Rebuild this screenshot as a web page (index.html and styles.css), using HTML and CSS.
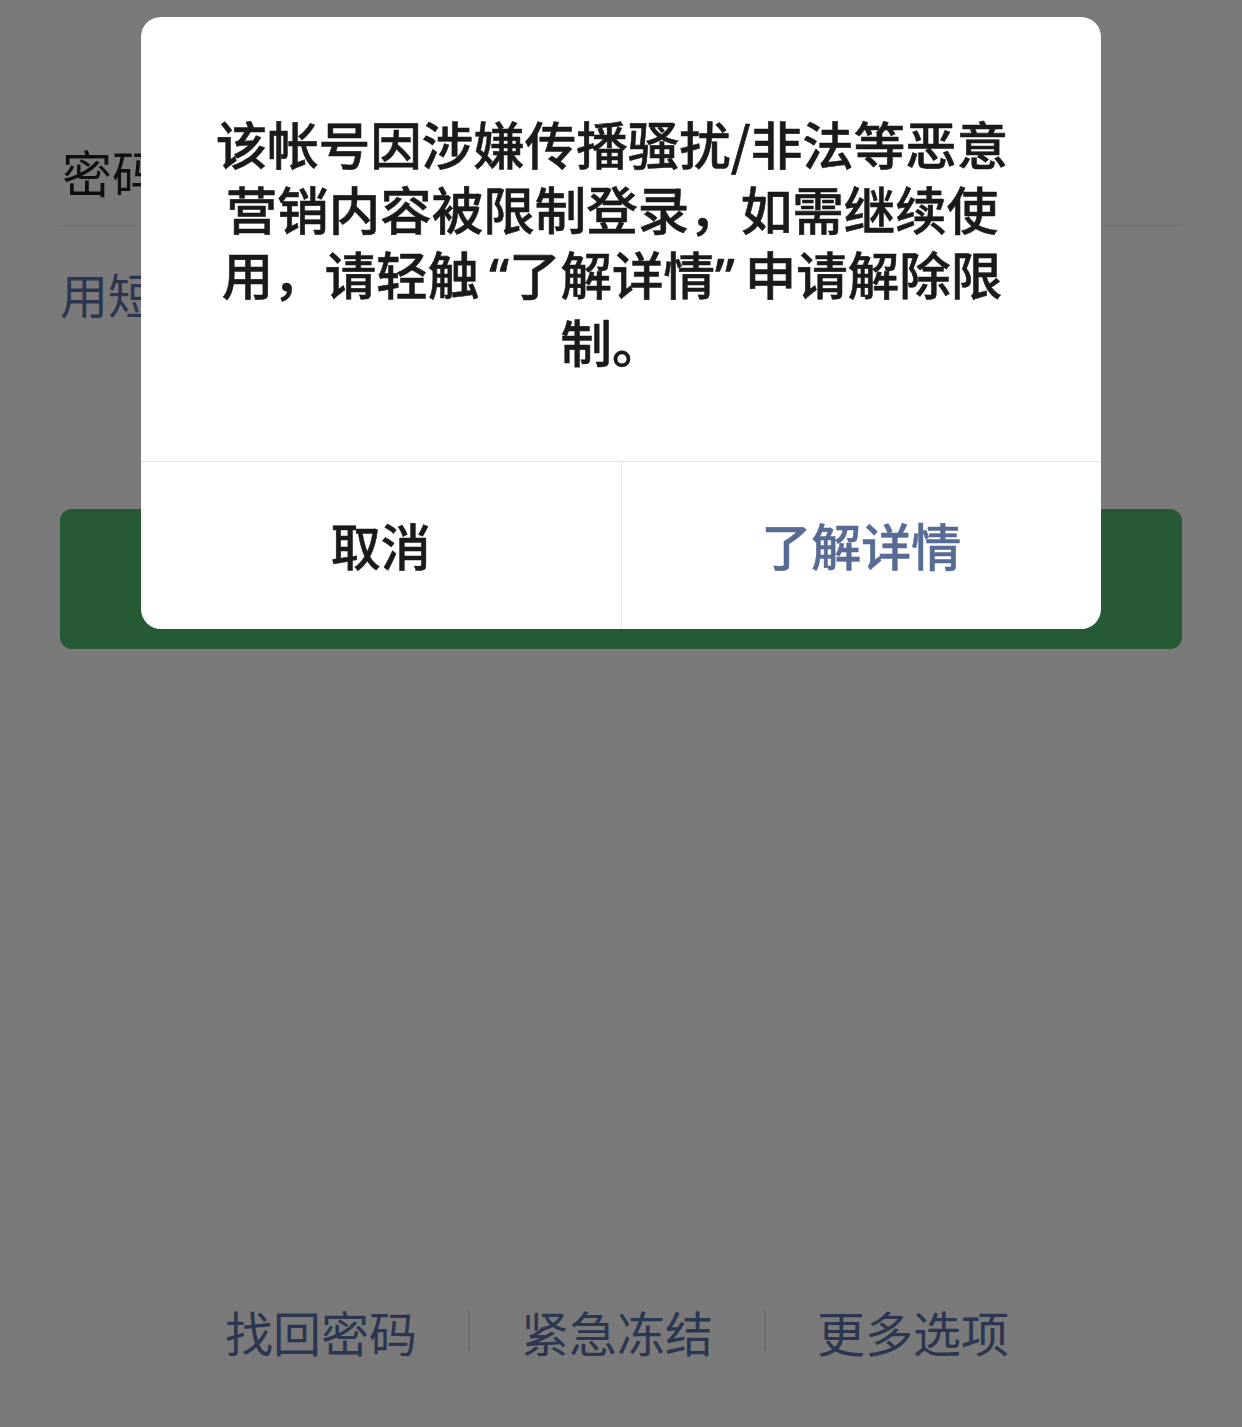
FILE: index.html
```html
<!DOCTYPE html>
<html lang="zh-CN">
<head>
<meta charset="utf-8">
<title>登录</title>
<link rel="stylesheet" href="styles.css">
</head>
<body>
<div class="page">
  <div class="form-row"><span class="label">密码</span></div>
  <div class="sms-link">用短信验证码登录</div>
  <div class="login-btn"></div>
  <div class="footer">
    <span class="f-link">找回密码</span>
    <span class="sep"></span>
    <span class="f-link">紧急冻结</span>
    <span class="sep"></span>
    <span class="f-link">更多选项</span>
  </div>
</div>
<div class="dialog">
  <div class="dialog-body">该帐号因涉嫌传播骚扰/非法等恶意<br>营销内容被限制登录，如需继续使<br>用，请轻触<span class="q q-open">“</span>了解详情<span class="q q-close">”</span>申请解除限<br>制。</div>
  <div class="dialog-actions">
    <div class="btn btn-cancel">取消</div>
    <div class="btn btn-primary">了解详情</div>
  </div>
</div>
</body>
</html>
```

FILE: styles.css
```css
html, body {
  margin: 0;
  padding: 0;
}
body {
  width: 1242px;
  height: 1427px;
  background: #7a7a7a;
  font-family: "Noto Sans CJK SC", "Noto Sans", sans-serif;
  position: relative;
  overflow: hidden;
}
.page {
  display: flex;
  flex-direction: column;
}
.form-row {
  margin: 0 60px;
  height: 226px;
  box-sizing: border-box;
  display: flex;
  align-items: flex-end;
  padding-bottom: 24px;
  padding-left: 2px;
  border-bottom: 1px solid #6e6e6e;
}
.label {
  font-size: 50px;
  line-height: 60px;
  color: #0f0f0f;
}
.sms-link {
  margin: 37px 60px 0;
  font-size: 48px;
  line-height: 60px;
  color: #2c3650;
}
.login-btn {
  margin: 186px 60px 0;
  height: 140px;
  border-radius: 12px;
  background: #255a35;
}
.footer {
  margin-top: 652px;
  padding-right: 8px;
  display: flex;
  justify-content: center;
  align-items: center;
  gap: 51px;
}
.f-link {
  font-size: 48px;
  line-height: 60px;
  color: #2c3650;
}
.sep {
  width: 2px;
  height: 40px;
  background: #6d6d6d;
}
.dialog {
  position: absolute;
  left: 141px;
  top: 17px;
  width: 960px;
  background: #ffffff;
  border-radius: 20px;
  overflow: hidden;
}
.dialog-body {
  padding: 93px 58px 88px 40px;
  font-size: 51.5px;
  line-height: 65px;
  font-weight: 500;
  -webkit-text-stroke: 0.6px #1a1a1a;
  color: #1a1a1a;
  text-align: center;
}
.q {
  font-family: "Noto Sans", "DejaVu Sans", sans-serif;
  font-weight: 500;
}
.q-open {
  margin-left: 10px;
}
.q-close {
  margin-right: 10px;
}
.dialog-actions {
  display: flex;
  height: 167px;
  border-top: 1px solid #e6e6e6;
}
.btn {
  flex: 1;
  display: flex;
  align-items: center;
  justify-content: center;
  font-size: 50px;
  font-weight: 500;
  padding-bottom: 4px;
}
.btn-cancel {
  color: #1a1a1a;
  -webkit-text-stroke: 0.5px #1a1a1a;
  border-right: 1px solid #e6e6e6;
}
.btn-primary {
  color: #576b95;
  -webkit-text-stroke: 0.5px #576b95;
}
```
